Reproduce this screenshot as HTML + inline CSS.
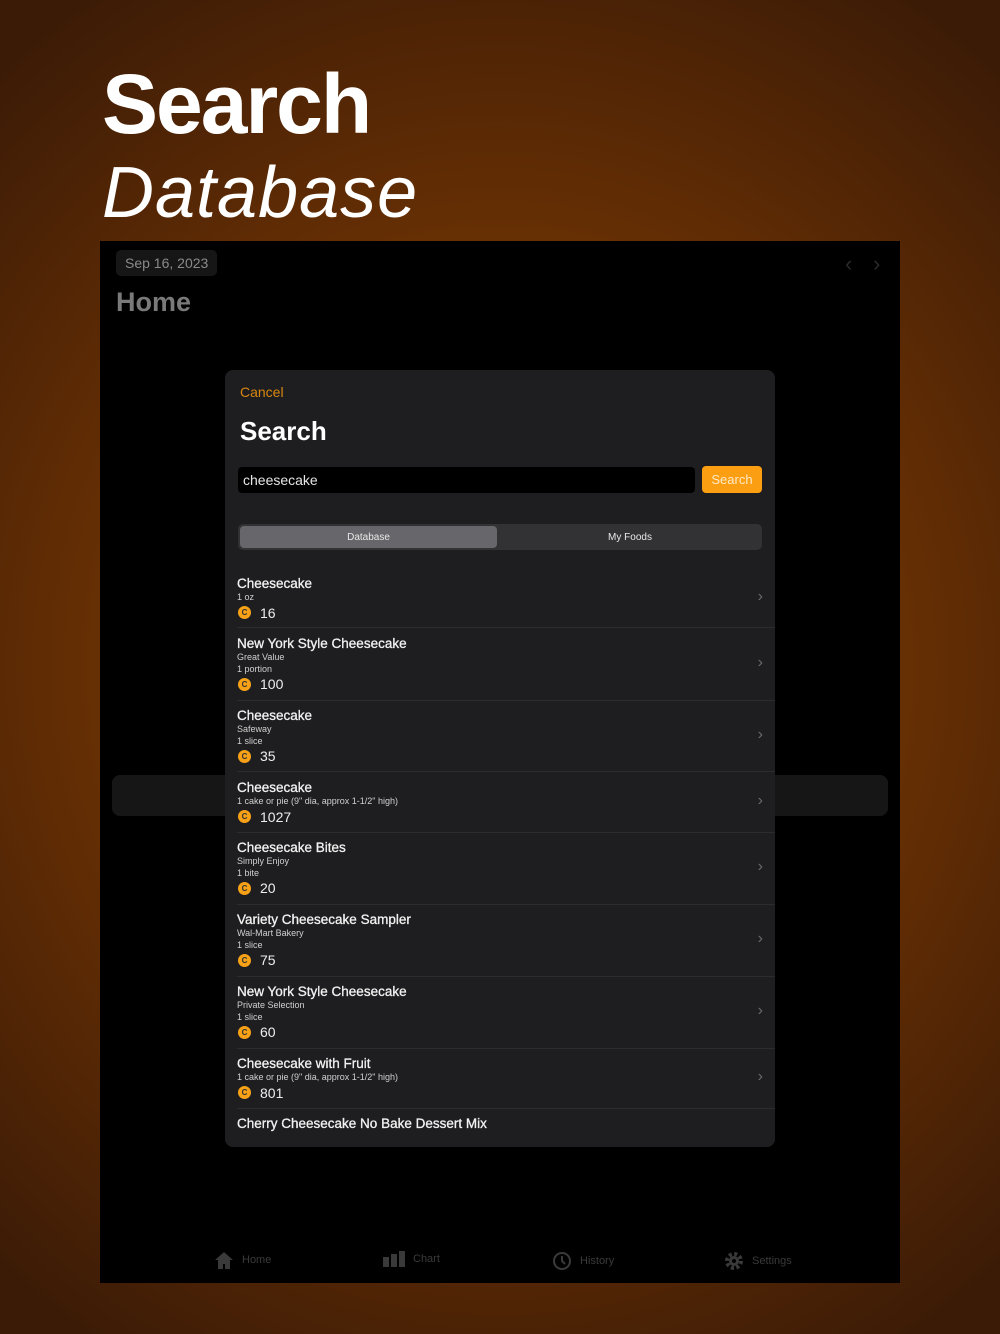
<!DOCTYPE html>
<html><head><meta charset="utf-8"><style>
*{margin:0;padding:0;box-sizing:border-box}
body{width:1000px;height:1334px;overflow:hidden;font-family:"Liberation Sans",sans-serif;background:radial-gradient(ellipse 75% 60% at 50% 50%,#7e3c02 0%,#6a3104 50%,#3c1b06 100%);position:relative}
.h1{position:absolute;left:102px;top:56px;color:#fff;font-size:84px;font-weight:bold;letter-spacing:-2px}
.h2{position:absolute;left:102px;top:152px;color:#fff;font-size:72px;font-style:italic;letter-spacing:1px}
.scr{position:absolute;left:100px;top:241px;width:800px;height:1042px;background:#000;overflow:hidden}
.date{position:absolute;left:16px;top:9px;background:#161616;color:#8a8a8a;font-size:14px;padding:5px 9px;border-radius:5px}
.home{position:absolute;left:16px;top:46px;color:#7a7a7a;font-size:27px;font-weight:bold}
.nav{position:absolute;top:10px;color:#2a2a2a;font-size:22px}
.bar{position:absolute;left:12px;top:534px;width:776px;height:41px;background:#161617;border-radius:8px}
.tab{position:absolute;top:1010px;color:#3a3a3a;font-size:11px;display:flex;align-items:center;gap:8px}
.modal{position:absolute;left:225px;top:370px;width:550px;height:777px;background:#1e1e20;border-radius:8px;overflow:hidden}
.cancel{position:absolute;left:15px;top:14px;color:#d8860f;font-size:14px}
.st{position:absolute;left:15px;top:46px;color:#fff;font-size:26px;font-weight:bold}
.inp{position:absolute;left:13px;top:97px;width:457px;height:26px;background:#000;border-radius:4px;color:#e6e6e6;font-size:14px;padding:5px 5px}
.btn{position:absolute;left:477px;top:96px;width:60px;height:27px;background:#fb9e12;border-radius:4px;color:#ffe9c6;font-size:13px;text-align:center;line-height:27px}
.seg{position:absolute;left:13px;top:154px;width:524px;height:26px;background:#323235;border-radius:5px}
.seg div{position:absolute;top:2px;height:22px;line-height:24px;font-size:10px;color:#e8e8e8;text-align:center}
.row{position:absolute;left:12px;width:538px;color:#fff}
.t{font-size:13.5px;color:#f2f2f2;line-height:16px;-webkit-text-stroke:0.3px #f2f2f2}
.s{font-size:9px;color:#d0d0d0;line-height:11.5px}
.c{font-size:14px;color:#eee;line-height:18px;display:flex;align-items:center}
.c i{display:inline-block;width:13px;height:13px;border-radius:50%;background:#f7a117;color:#333;font-size:8px;font-style:normal;text-align:center;line-height:13px;font-weight:bold;margin:0 9px 0 1px}
.sep{position:absolute;left:12px;right:0;height:1px;background:#2c2c2e}
.chev{position:absolute;right:12px;color:#6a6a6c;font-size:16px}
</style></head><body>
<div class="h1">Search</div>
<div class="h2">Database</div>
<div class="scr">
<div class="date">Sep 16, 2023</div>
<div class="home">Home</div>
<div class="nav" style="left:745px">&#x2039;</div><div class="nav" style="left:773px">&#x203A;</div>
<div class="bar"></div>
<div class="tab" style="left:114px"><svg width="20" height="18" viewBox="0 0 20 18"><path d="M10 1L1 9h3v9h5v-5h2v5h5V9h3z" fill="#3a3a3a"/></svg>Home</div>
<div class="tab" style="left:283px"><svg width="22" height="16" viewBox="0 0 22 16"><rect x="0" y="6" width="6" height="10" fill="#3a3a3a"/><rect x="8" y="3" width="6" height="13" fill="#3a3a3a"/><rect x="16" y="0" width="6" height="16" fill="#3a3a3a"/></svg>Chart</div>
<div class="tab" style="left:452px"><svg width="20" height="20" viewBox="0 0 20 20"><circle cx="10" cy="10" r="8" fill="none" stroke="#3a3a3a" stroke-width="2"/><path d="M10 5v5l3 3" stroke="#3a3a3a" stroke-width="2" fill="none"/></svg>History</div>
<div class="tab" style="left:624px"><svg width="20" height="20" viewBox="0 0 20 20"><circle cx="10" cy="10" r="7" fill="none" stroke="#3a3a3a" stroke-width="4" stroke-dasharray="3 2.5"/><circle cx="10" cy="10" r="5" fill="#3a3a3a"/><circle cx="10" cy="10" r="2" fill="#000"/></svg>Settings</div>
</div>
<div class="modal">
<div class="cancel">Cancel</div>
<div class="st">Search</div>
<div class="inp">cheesecake</div>
<div class="btn">Search</div>
<div class="seg"><div style="left:2px;width:257px;background:#67676b;border-radius:4px">Database</div><div style="left:262px;width:260px">My Foods</div></div>

<div class="row" style="top:206px"><div class="t">Cheesecake</div><div class="s">1 oz</div><div class="c"><i>C</i>16</div></div>
<div class="chev" style="top:218px">&#x203A;</div><div class="sep" style="top:257px"></div>

<div class="row" style="top:266px"><div class="t">New York Style Cheesecake</div><div class="s">Great Value</div><div class="s">1 portion</div><div class="c"><i>C</i>100</div></div>
<div class="chev" style="top:284px">&#x203A;</div><div class="sep" style="top:330px"></div>

<div class="row" style="top:338px"><div class="t">Cheesecake</div><div class="s">Safeway</div><div class="s">1 slice</div><div class="c"><i>C</i>35</div></div>
<div class="chev" style="top:356px">&#x203A;</div><div class="sep" style="top:401px"></div>

<div class="row" style="top:410px"><div class="t">Cheesecake</div><div class="s">1 cake or pie (9" dia, approx 1-1/2" high)</div><div class="c"><i>C</i>1027</div></div>
<div class="chev" style="top:422px">&#x203A;</div><div class="sep" style="top:462px"></div>

<div class="row" style="top:470px"><div class="t">Cheesecake Bites</div><div class="s">Simply Enjoy</div><div class="s">1 bite</div><div class="c"><i>C</i>20</div></div>
<div class="chev" style="top:488px">&#x203A;</div><div class="sep" style="top:534px"></div>

<div class="row" style="top:542px"><div class="t">Variety Cheesecake Sampler</div><div class="s">Wal-Mart Bakery</div><div class="s">1 slice</div><div class="c"><i>C</i>75</div></div>
<div class="chev" style="top:560px">&#x203A;</div><div class="sep" style="top:606px"></div>

<div class="row" style="top:614px"><div class="t">New York Style Cheesecake</div><div class="s">Private Selection</div><div class="s">1 slice</div><div class="c"><i>C</i>60</div></div>
<div class="chev" style="top:632px">&#x203A;</div><div class="sep" style="top:678px"></div>

<div class="row" style="top:686px"><div class="t">Cheesecake with Fruit</div><div class="s">1 cake or pie (9" dia, approx 1-1/2" high)</div><div class="c"><i>C</i>801</div></div>
<div class="chev" style="top:698px">&#x203A;</div><div class="sep" style="top:738px"></div>

<div class="row" style="top:746px"><div class="t">Cherry Cheesecake No Bake Dessert Mix</div></div>
</div>
</body></html>
